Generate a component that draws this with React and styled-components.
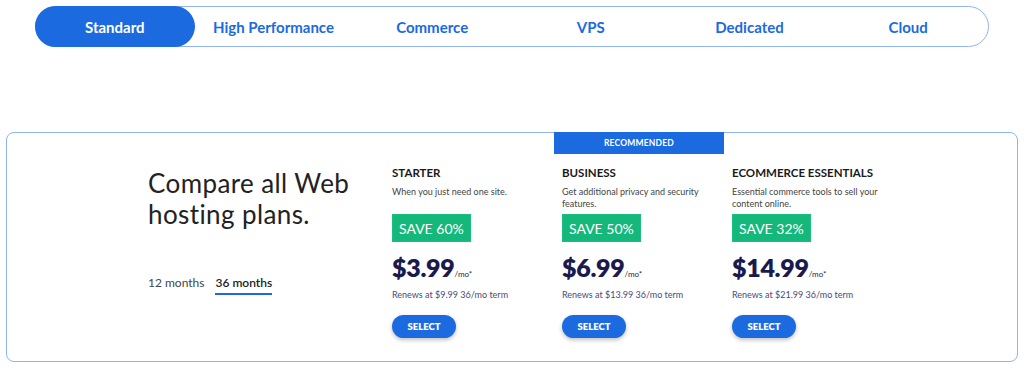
import React, { useState } from 'react';
import styled, { createGlobalStyle } from 'styled-components';

const GlobalStyle = createGlobalStyle`
  body {
    margin: 0;
    background: #fff;
    font-family: Lato, "Open Sans", Arial, sans-serif;
  }
`;

const Page = styled.div`
  width: 1024px;
  height: 368px;
  padding: 6px 6px 0;
  box-sizing: border-box;
`;

const TabBar = styled.div`
  margin: 0 29px 0 29px;
  height: 41px;
  border: 1px solid #8fb4ef;
  border-radius: 21px;
  display: grid;
  grid-template-columns: repeat(6, 1fr);
  box-sizing: border-box;
`;

const Tab = styled.button`
  border: none;
  margin: -1px 0 -1px -1px;
  border-radius: 21px;
  background: ${(p) => (p.$active ? '#1b6ae0' : 'transparent')};
  color: ${(p) => (p.$active ? '#fff' : '#1b6ae0')};
  font-family: inherit;
  font-weight: 700;
  font-size: 15px;
  cursor: pointer;
`;

const Card = styled.div`
  margin-top: 85px;
  height: 230px;
  border: 1px solid #8fb4ef;
  border-radius: 8px;
  display: flex;
  box-sizing: border-box;
`;

const Intro = styled.div`
  width: 236px;
  margin-left: 141px;
  padding-top: 35px;
  display: flex;
  flex-direction: column;
`;

const Heading = styled.h2`
  margin: 0;
  font-weight: 400;
  font-size: 26px;
  line-height: 31px;
  letter-spacing: 0.4px;
  color: #222;
`;

const Terms = styled.div`
  margin-top: 45px;
  display: flex;
  gap: 11px;
`;

const Term = styled.span`
  font-size: 12px;
  color: ${(p) => (p.$active ? '#222' : '#444')};
  font-weight: ${(p) => (p.$active ? 600 : 400)};
  padding-bottom: 3px;
  border-bottom: 2px solid ${(p) => (p.$active ? '#1b6ae0' : 'transparent')};
  cursor: pointer;
`;

const Plans = styled.div`
  display: flex;
`;

const Plan = styled.div`
  width: 170px;
  display: flex;
  flex-direction: column;
`;

const Banner = styled.div`
  height: 22px;
  margin-top: -1px;
  background: ${(p) => (p.$show ? '#1b6ae0' : 'transparent')};
  color: #fff;
  font-size: 8.5px;
  font-weight: 700;
  letter-spacing: 0.2px;
  display: flex;
  align-items: center;
  justify-content: center;
`;

const PlanBody = styled.div`
  padding: 12px 0 0 8px;
  display: flex;
  flex-direction: column;
  align-items: flex-start;
`;

const PlanName = styled.div`
  font-size: 11.5px;
  font-weight: 700;
  color: #1a1a1a;
  line-height: 14px;
`;

const PlanDesc = styled.div`
  margin-top: 6px;
  font-size: 9px;
  line-height: 11.5px;
  color: #444;
  height: 23px;
  width: 156px;
`;

const Save = styled.div`
  margin-top: 5px;
  height: 28px;
  padding: 0 6px;
  background: #14b87a;
  border: 1px solid #1bc07f;
  color: #fff;
  font-size: 14px;
  display: flex;
  align-items: center;
  box-sizing: border-box;
`;

const Price = styled.div`
  margin-top: 11px;
  display: flex;
  align-items: baseline;
  color: #1b1a4f;
  line-height: 28px;
`;

const Amount = styled.span`
  font-size: 25px;
  font-weight: 800;
  letter-spacing: -0.3px;
`;

const Per = styled.span`
  font-size: 8px;
  margin-left: 0;
`;

const Renew = styled.div`
  margin-top: 1px;
  font-size: 9px;
  line-height: 11px;
  color: #4a4a78;
`;

const Select = styled.button`
  margin-top: 15px;
  width: 64px;
  height: 23px;
  border: none;
  border-radius: 12px;
  background: #1b6ae0;
  color: #fff;
  font-family: inherit;
  font-size: 9.5px;
  font-weight: 800;
  box-shadow: 0 2px 4px rgba(0, 0, 0, 0.25);
  cursor: pointer;
`;

const tabs = ['Standard', 'High Performance', 'Commerce', 'VPS', 'Dedicated', 'Cloud'];

const plans = [
  { name: 'STARTER', desc: 'When you just need one site.', save: 60, price: '3.99', renew: '9.99' },
  { name: 'BUSINESS', desc: 'Get additional privacy and security features.', save: 50, price: '6.99', renew: '13.99', recommended: true },
  { name: 'ECOMMERCE ESSENTIALS', desc: 'Essential commerce tools to sell your content online.', save: 32, price: '14.99', renew: '21.99' },
];

export default function App() {
  const [tab, setTab] = useState('Standard');
  const [term, setTerm] = useState(36);

  return (
    <Page>
      <GlobalStyle />
      <TabBar>
        {tabs.map((t) => (
          <Tab key={t} $active={t === tab} onClick={() => setTab(t)}>
            {t}
          </Tab>
        ))}
      </TabBar>

      <Card>
        <Intro>
          <Heading>
            Compare all Web
            <br />
            hosting plans.
          </Heading>
          <Terms>
            <Term $active={term === 12} onClick={() => setTerm(12)}>12 months</Term>
            <Term $active={term === 36} onClick={() => setTerm(36)}>36 months</Term>
          </Terms>
        </Intro>

        <Plans>
          {plans.map((p) => (
            <Plan key={p.name}>
              <Banner $show={p.recommended}>{p.recommended ? 'RECOMMENDED' : ''}</Banner>
              <PlanBody>
                <PlanName>{p.name}</PlanName>
                <PlanDesc>{p.desc}</PlanDesc>
                <Save>SAVE {p.save}%</Save>
                <Price>
                  <Amount>${p.price}</Amount>
                  <Per>/mo*</Per>
                </Price>
                <Renew>Renews at ${p.renew} 36/mo term</Renew>
                <Select>SELECT</Select>
              </PlanBody>
            </Plan>
          ))}
        </Plans>
      </Card>
    </Page>
  );
}
